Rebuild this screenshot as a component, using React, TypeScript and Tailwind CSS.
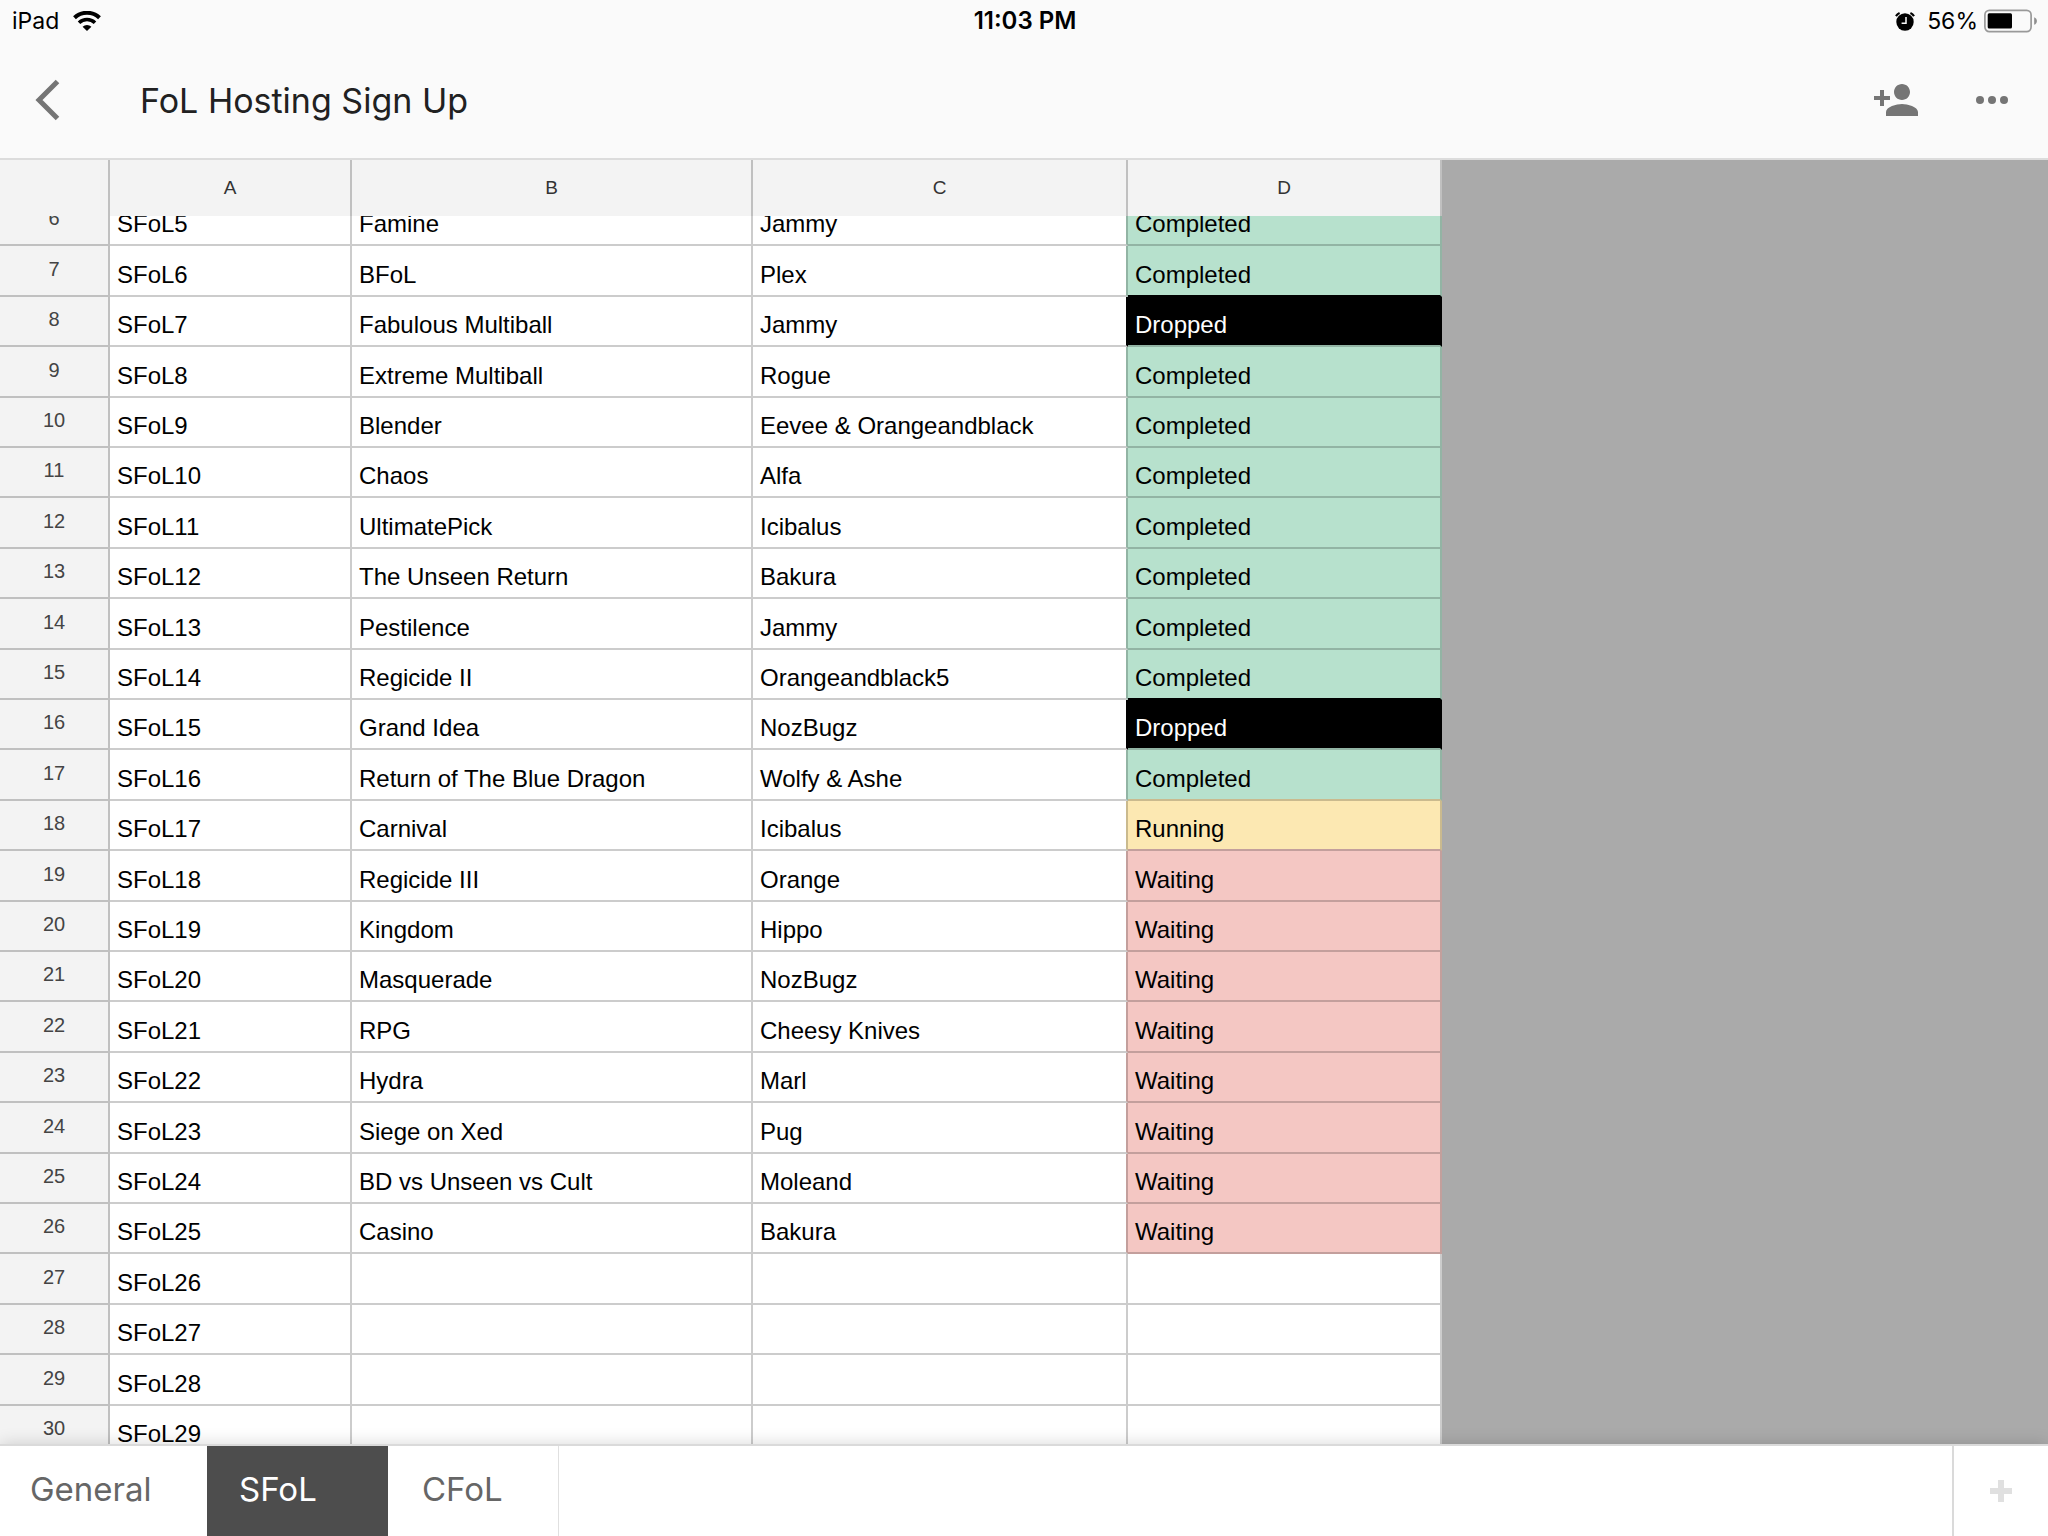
import React from "react";

type Status = "Completed" | "Dropped" | "Running" | "Waiting" | "";
type Row = { n: number; h: string; id: string; game: string; host: string; status: Status };

const T = "h-[50px]";
const U = "h-[51px]";

const rows: Row[] = [
  { n: 6, h: "h-[30px]", id: "SFoL5", game: "Famine", host: "Jammy", status: "Completed" },
  { n: 7, h: U, id: "SFoL6", game: "BFoL", host: "Plex", status: "Completed" },
  { n: 8, h: T, id: "SFoL7", game: "Fabulous Multiball", host: "Jammy", status: "Dropped" },
  { n: 9, h: U, id: "SFoL8", game: "Extreme Multiball", host: "Rogue", status: "Completed" },
  { n: 10, h: T, id: "SFoL9", game: "Blender", host: "Eevee & Orangeandblack", status: "Completed" },
  { n: 11, h: T, id: "SFoL10", game: "Chaos", host: "Alfa", status: "Completed" },
  { n: 12, h: U, id: "SFoL11", game: "UltimatePick", host: "Icibalus", status: "Completed" },
  { n: 13, h: T, id: "SFoL12", game: "The Unseen Return", host: "Bakura", status: "Completed" },
  { n: 14, h: U, id: "SFoL13", game: "Pestilence", host: "Jammy", status: "Completed" },
  { n: 15, h: T, id: "SFoL14", game: "Regicide II", host: "Orangeandblack5", status: "Completed" },
  { n: 16, h: T, id: "SFoL15", game: "Grand Idea", host: "NozBugz", status: "Dropped" },
  { n: 17, h: U, id: "SFoL16", game: "Return of The Blue Dragon", host: "Wolfy & Ashe", status: "Completed" },
  { n: 18, h: T, id: "SFoL17", game: "Carnival", host: "Icibalus", status: "Running" },
  { n: 19, h: U, id: "SFoL18", game: "Regicide III", host: "Orange", status: "Waiting" },
  { n: 20, h: T, id: "SFoL19", game: "Kingdom", host: "Hippo", status: "Waiting" },
  { n: 21, h: T, id: "SFoL20", game: "Masquerade", host: "NozBugz", status: "Waiting" },
  { n: 22, h: U, id: "SFoL21", game: "RPG", host: "Cheesy Knives", status: "Waiting" },
  { n: 23, h: T, id: "SFoL22", game: "Hydra", host: "Marl", status: "Waiting" },
  { n: 24, h: U, id: "SFoL23", game: "Siege on Xed", host: "Pug", status: "Waiting" },
  { n: 25, h: T, id: "SFoL24", game: "BD vs Unseen vs Cult", host: "Moleand", status: "Waiting" },
  { n: 26, h: T, id: "SFoL25", game: "Casino", host: "Bakura", status: "Waiting" },
  { n: 27, h: U, id: "SFoL26", game: "", host: "", status: "" },
  { n: 28, h: T, id: "SFoL27", game: "", host: "", status: "" },
  { n: 29, h: U, id: "SFoL28", game: "", host: "", status: "" },
  { n: 30, h: T, id: "SFoL29", game: "", host: "", status: "" },
];

const fill: Record<Status, string> = {
  Completed: "bg-[#b7e1cd] text-black",
  Dropped: "bg-black text-white",
  Running: "bg-[#fce8b2] text-black",
  Waiting: "bg-[#f4c7c3] text-black",
  "": "bg-white text-black",
};
const rightEdge: Record<Status, string> = {
  Completed: "border-r-[#92b4a4]",
  Dropped: "border-r-black",
  Running: "border-r-[#caba8e]",
  Waiting: "border-r-[#c39f9c]",
  "": "border-r-[#cccccc]",
};
const bottomEdge: Record<Status, string> = {
  Completed: "border-b-[#92b4a4]",
  Dropped: "border-b-black",
  Running: "border-b-[#caba8e]",
  Waiting: "border-b-[#c39f9c]",
  "": "border-b-[#cccccc]",
};

function WifiIcon() {
  return (
    <svg className="h-5 w-7" viewBox="0 0 28 20" aria-hidden="true">
      <path d="M1.500 6.800a18 18 0 0 1 25 0" fill="none" stroke="#000" strokeWidth="4" />
      <path d="M6 11.700a11.500 11.500 0 0 1 16 0" fill="none" stroke="#000" strokeWidth="3.6" />
      <path d="M9.600 15.700a6.400 6.400 0 0 1 8.800 0L14 20z" fill="#000" />
    </svg>
  );
}

function AlarmIcon() {
  return (
    <svg className="h-[19px] w-5" viewBox="0 0 20 19" aria-hidden="true">
      <circle cx="10" cy="10" r="8.7" fill="#000" />
      <path d="M1 4.2A8 8 0 0 1 4.600 1.100M19 4.2a8 8 0 0 0-3.600-3.100" fill="none" stroke="#000" strokeWidth="2.2" />
      <path d="M11 5v6.2H6.6" fill="none" stroke="#fafafa" strokeWidth="1.5" />
    </svg>
  );
}

function BatteryIcon() {
  return (
    <svg className="h-6 w-[54px]" viewBox="0 0 54 24" aria-hidden="true">
      <rect x="0.9" y="1.4" width="46.2" height="21.2" rx="4.5" fill="none" stroke="#999" strokeWidth="1.7" />
      <rect x="3.7" y="4.3" width="24.3" height="15.2" rx="1.5" fill="#000" />
      <path d="M50.2 8.2c3.6 1.4 3.6 6.200 0 7.600z" fill="#8e8e8e" />
    </svg>
  );
}

export default function App() {
  return (
    <div className="flex h-screen flex-col overflow-hidden bg-[#aaaaaa] font-['Inter',sans-serif]">
      <header className="shrink-0 border-b-2 border-[#dcdcdc] bg-[#fafafa]">
        <div className="grid h-[42px] grid-cols-3 items-center pl-3 pr-[10px] text-[23px] text-black">
          <div className="flex items-center gap-[14px]">
            <span>iPad</span>
            <WifiIcon />
          </div>
          <time className="text-center text-[24px] font-semibold">11:03 PM</time>
          <div className="flex items-center justify-end">
            <AlarmIcon />
            <span className="ml-3 mr-[6px]">56%</span>
            <BatteryIcon />
          </div>
        </div>
        <div className="flex h-[116px] items-center pl-6 pr-8">
          <button type="button" aria-label="Back" className="flex size-12 items-center justify-center">
            <svg className="size-12" viewBox="0 0 48 48" aria-hidden="true">
              <path d="M33.500 5.500 15 24l18.500 18.500" fill="none" stroke="#757575" strokeWidth="5" />
            </svg>
          </button>
          <h1 className="ml-[68px] flex-1 text-[34px] text-[#212121]">FoL Hosting Sign Up</h1>
          <button type="button" aria-label="Add people">
            <svg className="size-12" viewBox="0 0 24 24" fill="#757575" aria-hidden="true">
              <path d="M15 12c2.210 0 4-1.790 4-4s-1.790-4-4-4-4 1.790-4 4 1.790 4 4 4zm-9-1V7H4v3H1v2h3v3h2v-3h3v-2H6zm9 3c-2.670 0-8 1.340-8 4v2h16v-2c0-2.660-5.330-4-8-4z" />
            </svg>
          </button>
          <button type="button" aria-label="More" className="ml-12">
            <svg className="size-12" viewBox="0 0 24 24" fill="#757575" aria-hidden="true">
              <circle cx="6" cy="12" r="2" />
              <circle cx="12" cy="12" r="2" />
              <circle cx="18" cy="12" r="2" />
            </svg>
          </button>
        </div>
      </header>

      <main className="min-h-0 flex-1 overflow-hidden font-['Liberation_Sans',sans-serif]">
        <table className="w-[1442px] table-fixed border-separate border-spacing-0">
          <colgroup>
            <col className="w-[110px]" />
            <col className="w-[242px]" />
            <col className="w-[401px]" />
            <col className="w-[375px]" />
            <col className="w-[314px]" />
          </colgroup>
          <thead>
            <tr className="h-14 bg-[#f3f3f3] text-[19px] text-[#333]">
              <td className="border-r-2 border-[#c0c0c0] p-0" />
              {["A", "B", "C", "D"].map((c) => (
                <th key={c} scope="col" className="border-r-2 border-[#c0c0c0] p-0 font-normal">
                  {c}
                </th>
              ))}
            </tr>
          </thead>
          <tbody>
            {rows.map((r, i) => {
              const next = rows[i + 1]?.status || r.status;
              const box = i === 0 ? "flex h-7 items-end overflow-hidden" : "flex h-12 items-end";
              const cell = "border-b-2 border-r-2 p-0 align-bottom";
              const text = `${box} whitespace-nowrap pb-1.5 pl-[7px] text-[24px] leading-7`;
              return (
                <tr key={r.n} className={r.h}>
                  <th scope="row" className="border-b-2 border-r-2 border-[#c0c0c0] bg-[#f3f3f3] p-0 align-bottom font-normal">
                    <div className={`${box} justify-center pb-3.5 text-[20px] leading-6 text-[#444]`}>{r.n}</div>
                  </th>
                  <td className={`${cell} border-[#cccccc] bg-white`}>
                    <div className={text}>{r.id}</div>
                  </td>
                  <td className={`${cell} border-[#cccccc] bg-white`}>
                    <div className={text}>{r.game}</div>
                  </td>
                  <td className={`${cell} border-b-[#cccccc] bg-white ${rightEdge[r.status]}`}>
                    <div className={text}>{r.host}</div>
                  </td>
                  <td className={`${cell} ${fill[r.status]} ${rightEdge[r.status]} ${bottomEdge[next]}`}>
                    <div className={text}>{r.status}</div>
                  </td>
                </tr>
              );
            })}
          </tbody>
        </table>
      </main>

      <nav className="relative flex h-[92px] shrink-0 border-t-2 border-[#dadada] bg-white text-[33px] text-[#666] shadow-[0_0_16px_rgba(0,0,0,0.16)]">
        <button type="button" className="w-[207px] pb-[3px] pl-[30px] text-left">General</button>
        <button type="button" aria-current="page" className="w-[181px] bg-[#4d4d4d] pb-[3px] pl-8 text-left text-white">SFoL</button>
        <button type="button" className="w-[171px] border-r border-[#e0e0e0] pb-[3px] pl-[34px] text-left">CFoL</button>
        <button type="button" aria-label="Add sheet" className="ml-auto flex w-24 items-center justify-center border-l-2 border-[#dadada]">
          <svg className="size-[22px]" viewBox="0 0 22 22" aria-hidden="true">
            <path d="M8 0h6v8h8v6h-8v8H8v-8H0V8h8z" fill="#e0e0e0" />
          </svg>
        </button>
      </nav>
    </div>
  );
}
